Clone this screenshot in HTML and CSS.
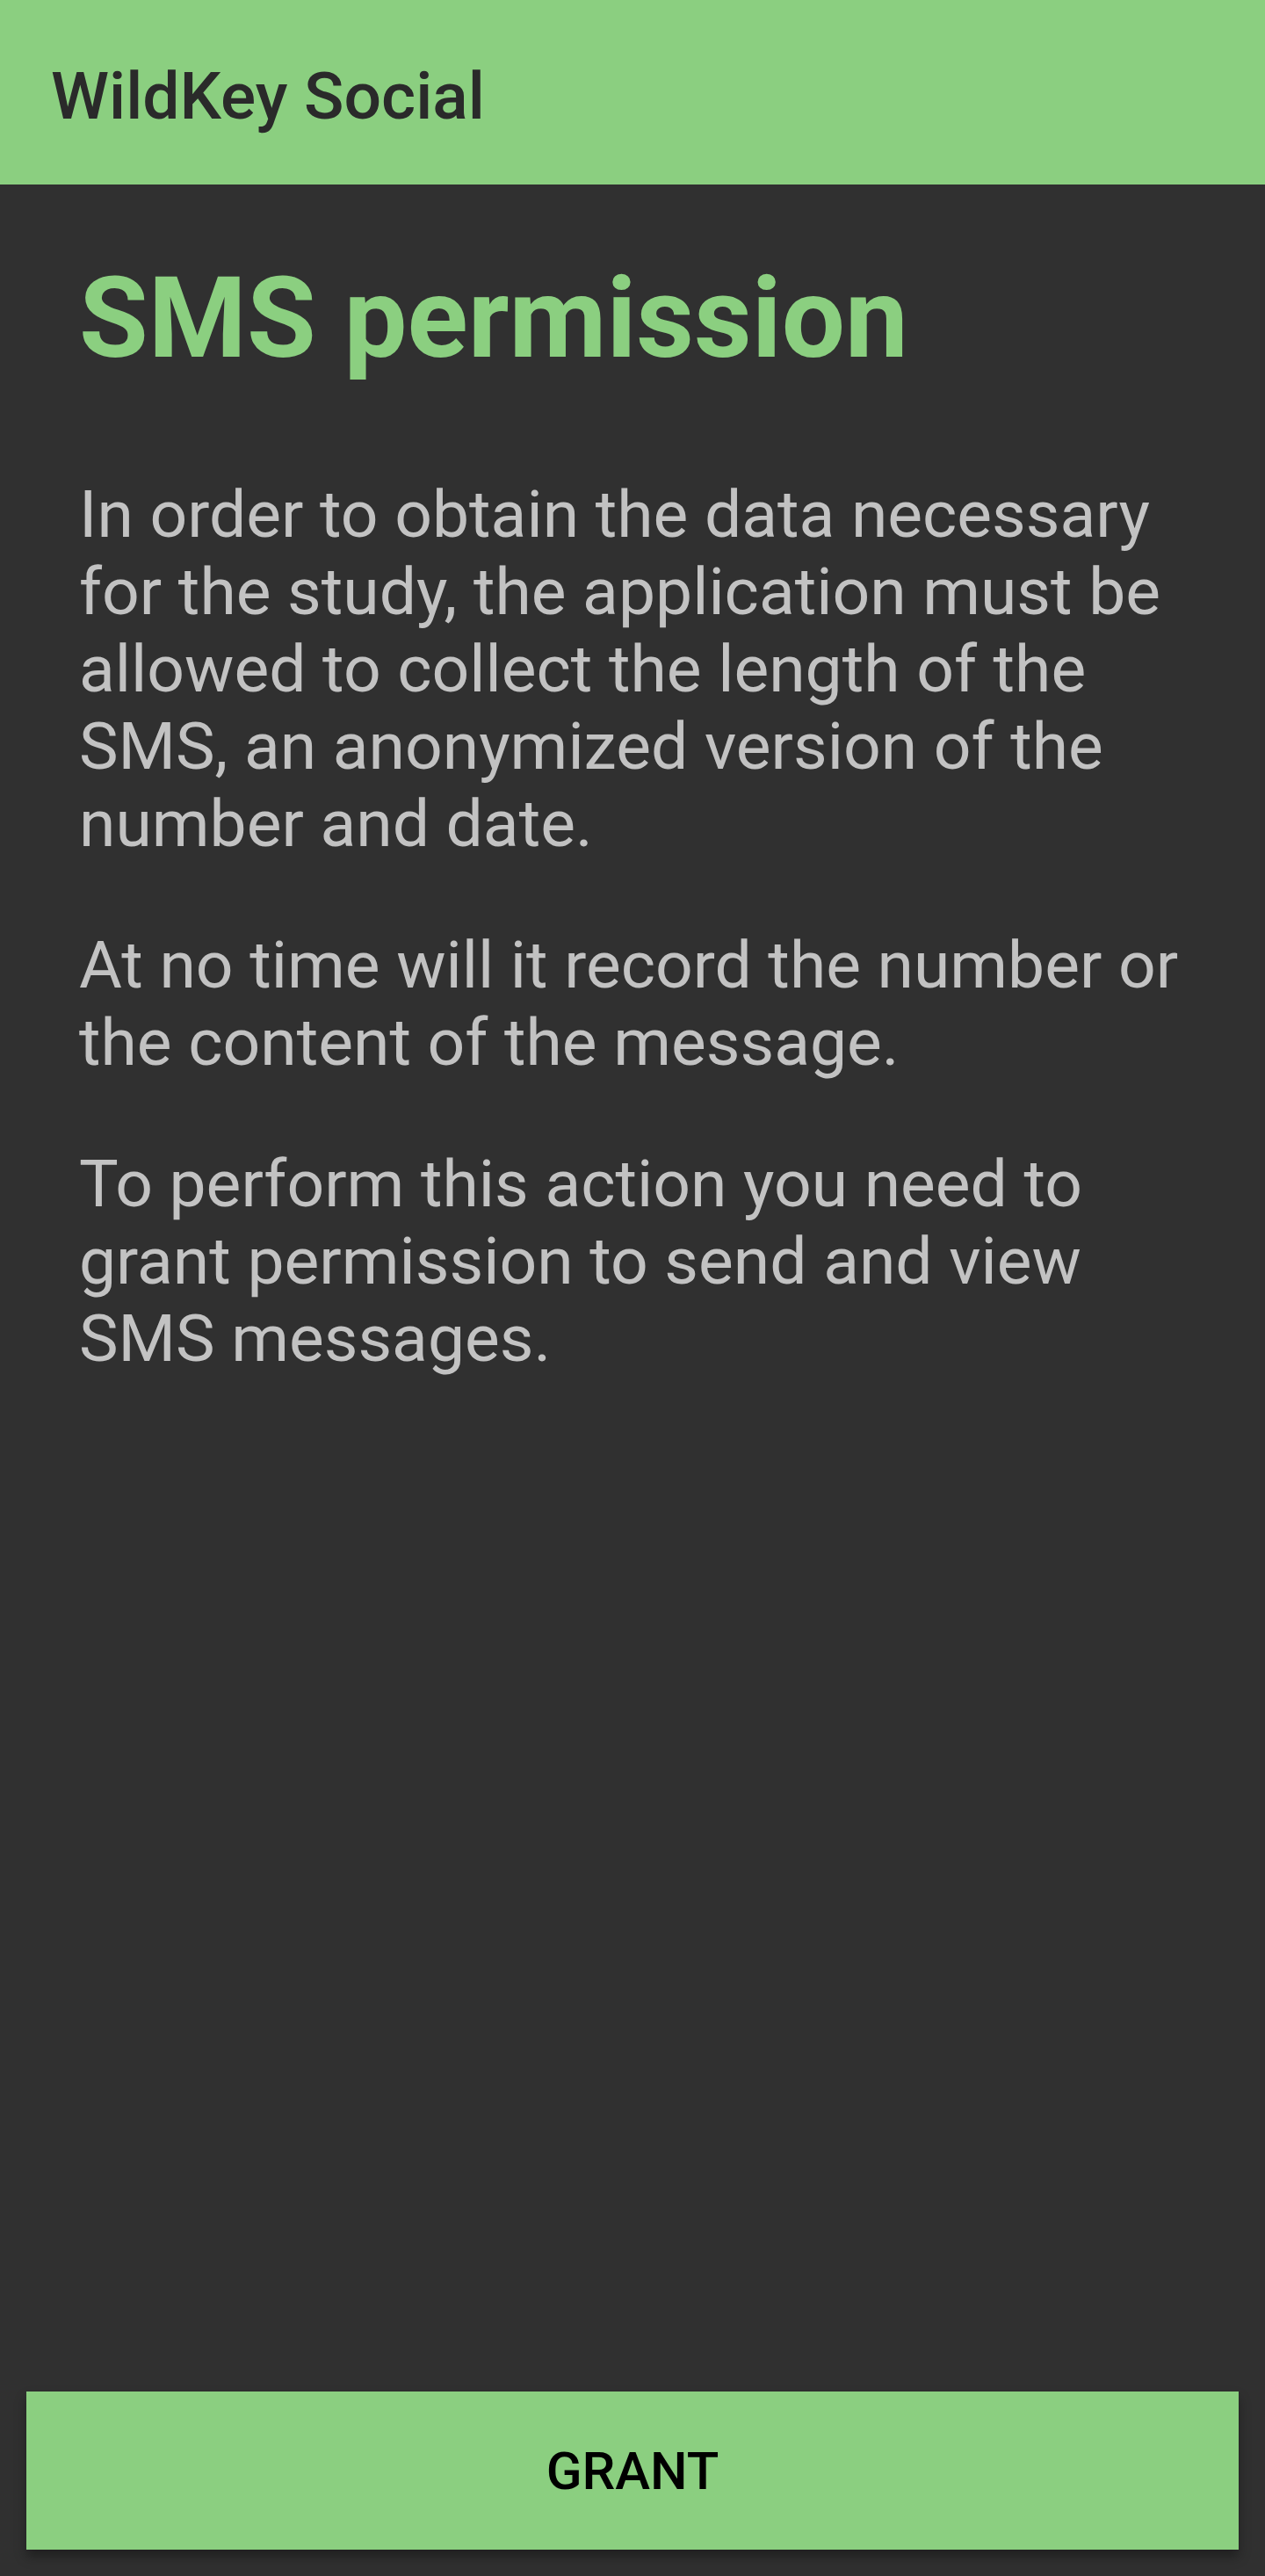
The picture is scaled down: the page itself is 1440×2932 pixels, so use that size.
FILE: index.html
```html
<!DOCTYPE html>
<html lang="en">
<head>
<meta charset="utf-8">
<title>WildKey Social</title>
<link rel="stylesheet" href="styles.css">
</head>
<body>
<div class="screen">
  <header class="toolbar">
    <h1 class="toolbar-title">WildKey Social</h1>
  </header>
  <main class="content">
    <h2 class="heading">SMS permission</h2>
    <p class="para">In order to obtain the data necessary for the study, the application must be allowed to collect the length of the SMS, an anonymized version of the number and date.</p>
    <p class="para">At no time will it record the number or the content of the message.</p>
    <p class="para">To perform this action you need to grant permission to send and view SMS messages.</p>
  </main>
  <div class="actions">
    <button class="grant-btn" type="button">GRANT</button>
  </div>
</div>
</body>
</html>
```

FILE: styles.css
```css
html, body {
  margin: 0;
  padding: 0;
  background: #303030;
}

body {
  font-family: Roboto, "Noto Sans", "Liberation Sans", sans-serif;
}

.screen {
  display: flex;
  flex-direction: column;
  width: 1440px;
  height: 2932px;
  background: #303030;
}

.toolbar {
  height: 210px;
  box-sizing: border-box;
  background: #8bcf80;
  padding: 65px 58px 0;
}

.toolbar-title {
  margin: 0;
  font-size: 75px;
  line-height: 88px;
  font-weight: 500;
  color: #2a2a2a;
}

.content {
  flex: 1;
  padding: 76px 90px 0;
}

.heading {
  margin: 0 0 103px;
  font-size: 128px;
  line-height: 152px;
  font-weight: 700;
  color: #8bcf80;
}

.para {
  margin: 0 0 73px;
  font-size: 75px;
  line-height: 88px;
  font-weight: 400;
  color: #c2c2c2;
}

.actions {
  padding: 0 30px 30px;
}

.grant-btn {
  display: block;
  width: 100%;
  height: 180px;
  border: none;
  border-radius: 0;
  background: #8bcf80;
  color: #000;
  font-family: Roboto, "Noto Sans", "Liberation Sans", sans-serif;
  font-size: 60px;
  font-weight: 500;
  box-shadow: 0 8px 12px rgba(0, 0, 0, 0.35);
  padding: 0;
}
```
